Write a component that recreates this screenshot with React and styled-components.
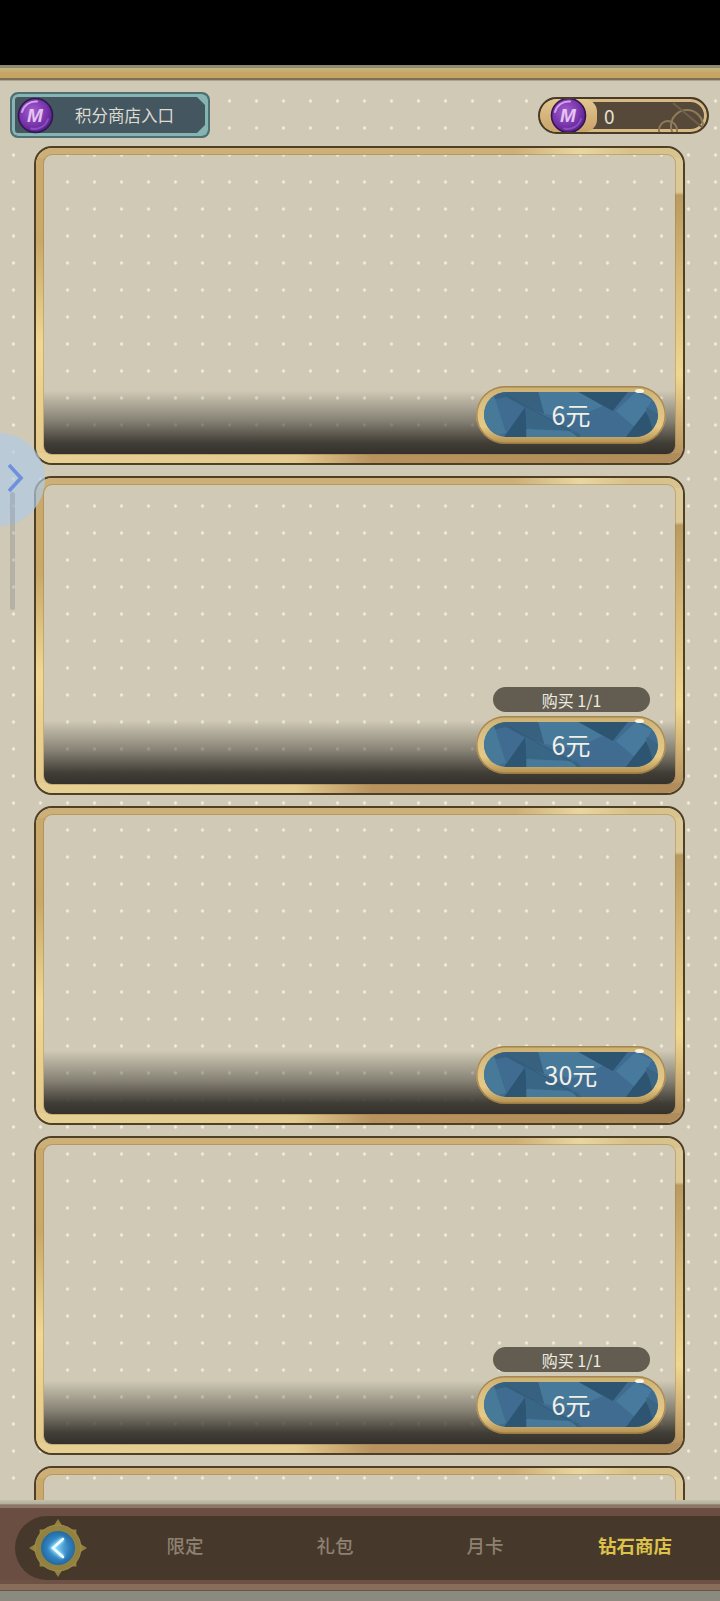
import React from 'react';
import styled, { createGlobalStyle } from 'styled-components';

const Global = createGlobalStyle`
  html, body { margin: 0; padding: 0; background: #000; }
  * { box-sizing: border-box; }
  body { font-family: "Noto Sans CJK SC", "Noto Sans", sans-serif; }
`;

const Page = styled.div`
  position: relative;
  width: 720px;
  height: 1601px;
  display: flex;
  flex-direction: column;
  overflow: hidden;
  background: #000;
`;

const StatusBar = styled.div`
  height: 65px;
  flex: none;
  background: #000;
`;

const Rail = styled.div`
  height: 16px;
  flex: none;
  background: linear-gradient(180deg, #8f8a6c 0 3px, #bfb285 3px 5px, #c9ab6c 5px 7px, #c4a566 7px 13px, #7d7053 13px 15px, #a9a58e 15px 16px);
`;

const Content = styled.main`
  height: 1419px;
  flex: none;
  overflow: hidden;
  display: flex;
  flex-direction: column;
  padding: 11px 11px 0 10px;
  background-color: #cfc9b5;
  background-image: radial-gradient(circle, #f2eee1 0.9px, rgba(240, 235, 220, 0) 2.2px);
  background-size: 27px 27px;
  background-position: 0 6.5px;
`;

const HeaderRow = styled.div`
  height: 46px;
  flex: none;
  display: flex;
  align-items: center;
  justify-content: space-between;
  margin-bottom: 8px;
`;

const ShopEntry = styled.div`
  position: relative;
  width: 200px;
  height: 46px;
  display: flex;
  align-items: center;
  padding-left: 5px;
  border-radius: 8px;
  border: 2px solid #4d7073;
  background: #445660;
  box-shadow: inset 0 0 0 3px #86b4b0;
  &::before, &::after {
    content: "";
    position: absolute;
    right: 3px;
    width: 8px;
    height: 8px;
    background: #86b4b0;
  }
  &::before { top: 3px; clip-path: polygon(0 0, 100% 0, 100% 100%); }
  &::after { bottom: 3px; clip-path: polygon(100% 0, 100% 100%, 0 100%); }
`;

const ShopEntryLabel = styled.span`
  flex: 1;
  text-align: center;
  padding-right: 13px;
  font-size: 16.5px;
  line-height: 1;
  color: #dedbd0;
`;

const CoinMark = styled.svg`
  display: block;
  flex: none;
  width: 37px;
  height: 37px;
`;

const Balance = styled.div`
  position: relative;
  width: 171px;
  height: 37px;
  display: flex;
  align-items: stretch;
  overflow: hidden;
  border-radius: 19px;
  border: 2px solid #4a3a28;
  background: #57493a;
  box-shadow: inset 0 0 0 3px #d5ba84;
`;

const CoinSlot = styled.div`
  width: 57px;
  flex: none;
  display: flex;
  align-items: center;
  justify-content: center;
  padding-right: 1px;
  border-radius: 17px 13px 13px 17px;
  background: linear-gradient(180deg, #e2c78f, #c9a36a);
`;

const BalanceValue = styled.span`
  align-self: center;
  margin-left: 7px;
  font-size: 19px;
  line-height: 1;
  color: #e4e1d4;
`;

const BalanceSwirl = styled.svg`
  position: absolute;
  right: 0;
  top: 0;
  width: 70px;
  height: 33px;
`;

const CardList = styled.div`
  display: flex;
  flex-direction: column;
  gap: 11px;
  margin-left: 24px;
  width: 651px;
`;

const Card = styled.article`
  position: relative;
  flex: none;
  height: 319px;
  border: 2px solid #4f3f24;
  border-radius: 18px;
  padding: 7px 8px 9px;
  display: flex;
  &::before {
    content: "";
    position: absolute;
    inset: 0;
    border-style: solid;
    border-color: transparent;
    border-width: 7px 8px 9px;
    border-radius: 16px;
    background:
      linear-gradient(90deg, #cdb077 0, #cdb077 74%, #e8d6a0 84%, #d8c089 92%, #d8c48f 100%) top / 100% 10px no-repeat border-box,
      linear-gradient(90deg, #e6d094 0, #e3cb8f 40%, #b8935f 52%, #b08c5a 100%) bottom / 100% 10px no-repeat border-box,
      linear-gradient(180deg, #c9aa6c 0, #c8a96a 30%, #f0d793 62%, #e2c88c 100%) left / 10px 100% no-repeat border-box,
      linear-gradient(180deg, #ddc997 0, #ddc997 14%, #b99a60 15%, #d5b877 40%, #f0d78f 72%, #b18c5a 100%) right / 10px 100% no-repeat border-box;
    -webkit-mask:
      linear-gradient(#000 0 0) padding-box,
      linear-gradient(#000 0 0) border-box;
    -webkit-mask-composite: xor;
    mask:
      linear-gradient(#000 0 0) padding-box exclude,
      linear-gradient(#000 0 0) border-box;
    pointer-events: none;
  }
`;

const CardBody = styled.div`
  position: relative;
  z-index: 1;
  flex: 1;
  display: flex;
  flex-direction: column;
  justify-content: flex-end;
  align-items: stretch;
  border-radius: 8px;
  box-shadow: 0 0 0 1px rgba(150, 118, 66, 0.4);
`;

const Quota = styled.div`
  align-self: flex-end;
  width: 157px;
  height: 25px;
  margin: 0 25px 3px 0;
  border-radius: 13px;
  display: flex;
  align-items: center;
  justify-content: center;
  background: #625d50;
  color: #eeebe0;
  font-size: 16px;
  line-height: 1;
`;

const Shade = styled.div`
  height: 69px;
  flex: none;
  display: flex;
  align-items: flex-start;
  justify-content: flex-end;
  padding: 1px 9px 0 0;
  border-radius: 0 0 8px 8px;
  background: linear-gradient(180deg, rgba(60, 57, 50, 0) 8%, rgba(60, 57, 50, 0.5) 52%, rgba(56, 53, 47, 0.94) 84%, rgba(52, 49, 44, 1) 100%);
`;

const PriceButton = styled.button`
  position: relative;
  width: 190px;
  height: 58px;
  flex: none;
  padding: 6px 8px 7px;
  border: 0;
  border-radius: 29px;
  font: inherit;
  background: linear-gradient(180deg, #cbb070 0, #d9bf83 30%, #e6c985 70%, #b08f50 100%);
  box-shadow: inset 0 0 0 1.5px rgba(140, 105, 55, 0.6);
  &::after {
    content: "";
    position: absolute;
    top: 3px;
    right: 22px;
    width: 9px;
    height: 4px;
    border-radius: 50%;
    background: rgba(255, 255, 245, 0.85);
  }
`;

const PriceFace = styled.span`
  position: relative;
  display: flex;
  width: 100%;
  height: 100%;
  align-items: center;
  justify-content: center;
  overflow: hidden;
  border-radius: 23px;
  background: #3f6c90;
  color: #f1efe6;
  font-size: 25px;
  line-height: 1;
`;

const FacetArt = styled.svg`
  position: absolute;
  inset: 0;
  width: 100%;
  height: 100%;
`;

const PriceText = styled.span`
  position: relative;
`;

const BottomEdge = styled.div`
  height: 5px;
  flex: none;
  background: linear-gradient(180deg, #c4c0ae, #b3af9d 80%, #6f6a56);
`;

const TabBar = styled.nav`
  height: 86px;
  flex: none;
  padding: 11px 0 11px 15px;
  background: linear-gradient(180deg, #8f7565 0 3px, #6a4e41 3px 75px, #6d5144 75px 79px, #8a6c5a 79px 85px, #5e5a4c 85px);
`;

const TabTrack = styled.div`
  height: 64px;
  display: flex;
  align-items: center;
  border-radius: 32px 0 0 32px;
  background: #46382b;
`;

const BackBadge = styled.svg`
  display: block;
  flex: none;
  width: 60px;
  height: 60px;
  margin: 0 22px 0 13px;
`;

const Tab = styled.div`
  width: 150px;
  flex: none;
  padding-bottom: 6px;
  text-align: center;
  font-size: 18.5px;
  line-height: 1;
  font-weight: ${p => (p.$active ? 700 : 500)};
  color: ${p => (p.$active ? '#dcc24a' : '#8e8171')};
`;

const BottomStrip = styled.div`
  height: 10px;
  flex: none;
  background: #8a8a7e;
`;

const SideHandle = styled.div`
  position: absolute;
  left: -48px;
  top: 433px;
  width: 93px;
  height: 93px;
  border-radius: 50%;
  background: rgba(176, 204, 232, 0.68);
`;

const SideChevron = styled.svg`
  position: absolute;
  left: 5px;
  top: 462px;
  width: 20px;
  height: 32px;
`;

const SideTrack = styled.div`
  position: absolute;
  left: 10px;
  top: 492px;
  width: 5px;
  height: 118px;
  border-radius: 3px;
  background: rgba(120, 125, 135, 0.3);
`;

let coinSeq = 0;
const Coin = () => {
  const id = `coin${++coinSeq}`;
  return (
    <CoinMark viewBox="0 0 37 37">
      <defs>
        <radialGradient id={id} cx="0.42" cy="0.38" r="0.62">
          <stop offset="0" stopColor="#a55cd0" />
          <stop offset="0.65" stopColor="#7a36ad" />
          <stop offset="1" stopColor="#54228c" />
        </radialGradient>
      </defs>
      <circle cx="18.5" cy="18.5" r="17" fill={`url(#${id})`} stroke="#33164f" strokeWidth="1.6" />
      <path d="M5 15 A14 14 0 0 1 20 4.5" fill="none" stroke="#cfa3e6" strokeWidth="2" strokeLinecap="round" />
      <path d="M14 31.5 A14 14 0 0 0 31 22" fill="none" stroke="#8f4cc0" strokeWidth="2" strokeLinecap="round" />
      <text x="18" y="24.5" textAnchor="middle" fontFamily="'Liberation Sans', sans-serif" fontWeight="700" fontStyle="italic" fontSize="19" fill="#e3c6ef">M</text>
    </CoinMark>
  );
};

const Facets = () => (
  <FacetArt viewBox="0 0 173 45" preserveAspectRatio="none">
    <polygon points="0,0 54,0 60,22 40,15 22,5 8,8" fill="#37617f" />
    <polygon points="0,9 10,4 22,41 6,45 0,45" fill="#477998" />
    <polygon points="20,45 41,15 43,45" fill="#2d5674" />
    <polygon points="42,15 96,42 92,45 42,36" fill="#3a6685" />
    <polygon points="54,0 95,0 118,14 90,26 60,22" fill="#47799b" />
    <polygon points="42,37 88,39 92,45 42,45" fill="#47799b" />
    <polygon points="94,0 143,0 128,19" fill="#2d5571" />
    <polygon points="131,19 151,0 167,8 151,36" fill="#477a9c" />
    <polygon points="141,45 161,19 173,45" fill="#2d5571" />
    <polygon points="161,15 173,22 173,45 167,36" fill="#3a6583" />
    <line x1="22" y1="3" x2="96" y2="45" stroke="#2f5a7d" strokeWidth="0.8" />
  </FacetArt>
);

const Compass = () => {
  const spikes = [0, 45, 90, 135, 180, 225, 270, 315];
  return (
    <BackBadge viewBox="0 0 60 60">
      <defs>
        <radialGradient id="orb" cx="0.5" cy="0.5" r="0.55">
          <stop offset="0" stopColor="#6fbde8" />
          <stop offset="0.6" stopColor="#2f80bd" />
          <stop offset="1" stopColor="#1f6398" />
        </radialGradient>
        <filter id="glow" x="-60%" y="-60%" width="220%" height="220%">
          <feGaussianBlur stdDeviation="1.6" />
        </filter>
      </defs>
      {spikes.map(a => (
        <polygon
          key={a}
          points={a % 90 === 0 ? '30,1 35,9 30,11 25,9' : '30,4 36,10 30,12 24,10'}
          fill="#93813f"
          transform={`rotate(${a} 30 30)`}
        />
      ))}
      <circle cx="30" cy="30" r="23" fill="#93813f" stroke="#a2904f" strokeWidth="1" />
      <circle cx="30" cy="30" r="17" fill="url(#orb)" />
      <path d="M35 21 L25 30 L35 39" fill="none" stroke="#8fe0ff" strokeWidth="5" filter="url(#glow)" />
      <path d="M35 21 L25 30 L35 39" fill="none" stroke="#eefaff" strokeWidth="2.6" strokeLinecap="round" />
    </BackBadge>
  );
};

const offers = [
  { price: '6元' },
  { price: '6元', quota: '购买 1/1' },
  { price: '30元' },
  { price: '6元', quota: '购买 1/1' },
  {},
];

const tabs = ['限定', '礼包', '月卡', '钻石商店'];

export default function App() {
  return (
    <Page>
      <Global />
      <StatusBar />
      <Rail />
      <Content>
        <HeaderRow>
          <ShopEntry>
            <Coin />
            <ShopEntryLabel>积分商店入口</ShopEntryLabel>
          </ShopEntry>
          <Balance>
            <CoinSlot>
              <Coin />
            </CoinSlot>
            <BalanceValue>0</BalanceValue>
            <BalanceSwirl viewBox="0 0 70 33">
              <circle cx="50" cy="27" r="16" fill="none" stroke="#8d7c5a" strokeWidth="2" />
              <circle cx="31" cy="31" r="9" fill="none" stroke="#8d7c5a" strokeWidth="2" />
              <line x1="36" y1="4" x2="66" y2="29" stroke="#6f6149" strokeWidth="2" />
            </BalanceSwirl>
          </Balance>
        </HeaderRow>
        <CardList>
          {offers.map((o, i) => (
            <Card key={i}>
              <CardBody>
                {o.quota && <Quota>{o.quota}</Quota>}
                {o.price && (
                  <Shade>
                    <PriceButton>
                      <PriceFace>
                        <Facets />
                        <PriceText>{o.price}</PriceText>
                      </PriceFace>
                    </PriceButton>
                  </Shade>
                )}
              </CardBody>
            </Card>
          ))}
        </CardList>
      </Content>
      <BottomEdge />
      <TabBar>
        <TabTrack>
          <Compass />
          {tabs.map((t, i) => (
            <Tab key={t} $active={i === tabs.length - 1}>{t}</Tab>
          ))}
        </TabTrack>
      </TabBar>
      <BottomStrip />
      <SideHandle />
      <SideTrack />
      <SideChevron viewBox="0 0 20 32">
        <path d="M4 3 L16 16 L4 29" fill="none" stroke="#6f90dc" strokeWidth="3.6" strokeLinejoin="miter" />
      </SideChevron>
    </Page>
  );
}
